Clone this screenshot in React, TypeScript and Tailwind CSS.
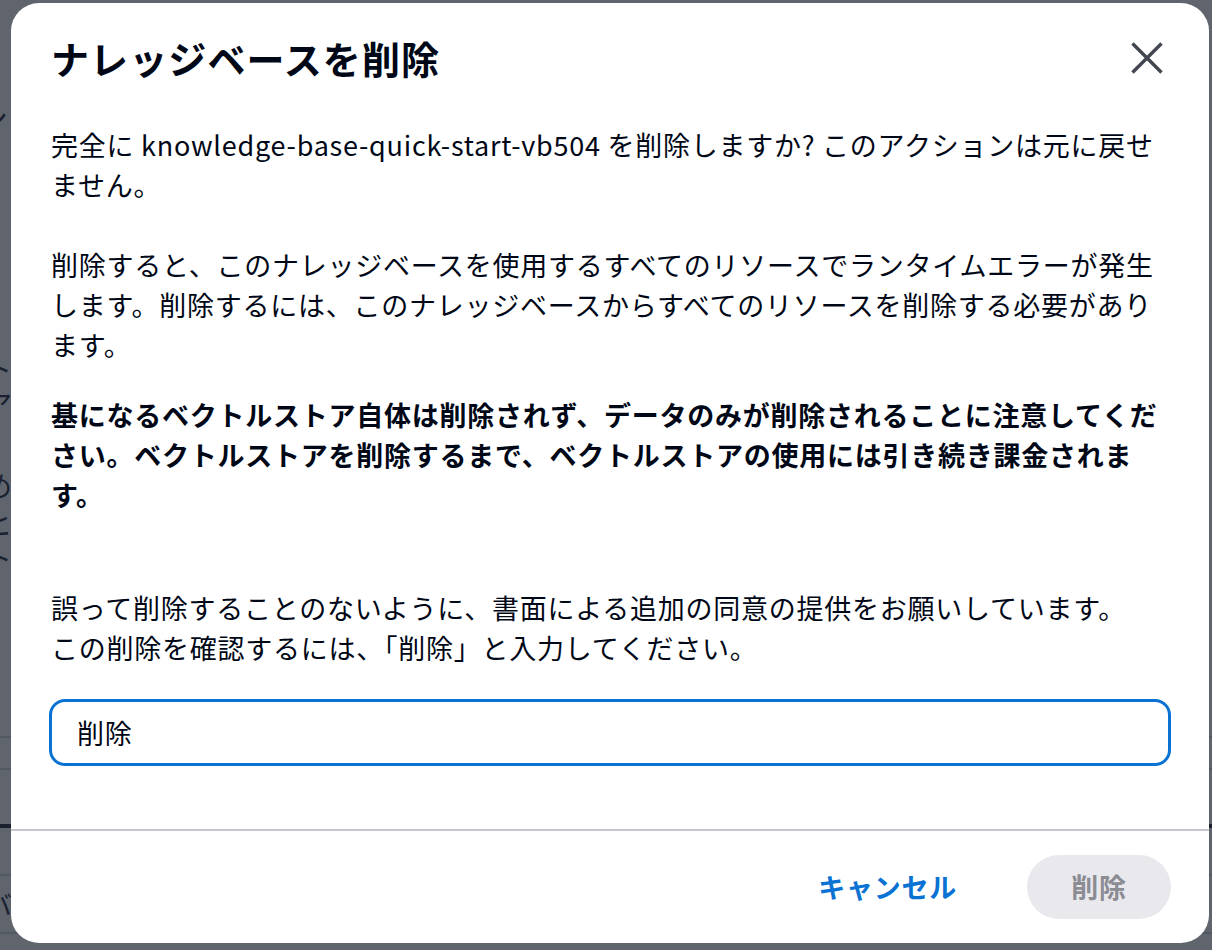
const jp = { fontFamily: '"Noto Sans CJK JP", "Noto Sans", sans-serif' };

// faint page content peeking out at the left edge under the overlay
function BackPage() {
  return (
    <div className="flex h-full w-full flex-col bg-white text-[#000716]" style={jp}>
      <div className="mt-[96px] -ml-[22px] text-[30px] leading-[40px]">シ</div>
      <div className="mt-[214px] -ml-[16px] text-[28px] leading-[36px]">ト</div>
      <div className="-ml-[16px] text-[28px] leading-[36px]">ア</div>
      <div className="mt-[44px] -ml-[16px] text-[28px] leading-[38px]">め</div>
      <div className="-ml-[16px] text-[28px] leading-[38px]">ヒ</div>
      <div className="-ml-[16px] text-[28px] leading-[30px]">ト</div>
      <div className="mt-[164px] h-[2px] w-full bg-[#d1d5db]" />
      <div className="mt-[30px] h-[2px] w-full bg-[#d1d5db]" />
      <div className="mt-[54px] h-[4px] w-full bg-[#000716]" />
      <div className="mt-[46px] h-[2px] w-full bg-[#d1d5db]" />
      <div className="mt-[8px] -ml-[14px] text-[26px] leading-[40px]">バ</div>
      <div className="mt-[8px] h-[2px] w-full bg-[#d1d5db]" />
    </div>
  );
}

function CloseIcon() {
  return (
    <svg width="32" height="32" viewBox="0 0 32 32" fill="none">
      <path d="M1.5 1.5 30.5 30.5M30.5 1.5 1.5 30.5" stroke="currentColor" strokeWidth="3.4" />
    </svg>
  );
}

export default function App() {
  return (
    <div className="relative h-[950px] w-[1212px] overflow-hidden" style={jp}>
      <BackPage />
      <div className="absolute inset-0 bg-[rgba(35,43,55,0.73)]" />

      <div className="absolute left-[11px] top-[3px] flex h-[940px] w-[1198px] flex-col rounded-[28px] bg-white text-[#000716]">
        {/* Header */}
        <div className="flex items-center justify-between px-[38px] pt-[31px]">
          <h1 className="pl-[2px] text-[38px] font-bold leading-[48px] tracking-[1.1px]">ナレッジベースを削除</h1>
          <button className="flex h-[48px] w-[48px] items-center justify-center text-[#424650]">
            <CloseIcon />
          </button>
        </div>

        {/* Body */}
        <div className="flex flex-col px-[38px] text-[27px] leading-[40px] tracking-[0.75px]">
          <div className="w-[1118px] pl-[2px]">
            <p className="mt-[43px]">
              完全に knowledge-base-quick-start-vb504 を削除しますか? このアクションは元に戻せません。
            </p>
            <p className="mt-[40px]">
              削除すると、このナレッジベースを使用するすべてのリソースでランタイムエラーが発生します。削除するには、このナレッジベースからすべてのリソースを削除する必要があります。
            </p>
            <p className="mt-[30px] font-bold">
              基になるベクトルストア自体は削除されず、データのみが削除されることに注意してください。ベクトルストアを削除するまで、ベクトルストアの使用には引き続き課金されます。
            </p>
            <p className="mt-[73px]">
              誤って削除することのないように、書面による追加の同意の提供をお願いしています。
              <br />
              この削除を確認するには、「削除」と入力してください。
            </p>
          </div>
          <input
            readOnly
            value="削除"
            className="mt-[31px] h-[67px] w-full rounded-[16px] border-[3px] border-[#0972d3] pl-[25px] text-[27px] tracking-[0.75px] text-[#000716] outline-none"
            style={jp}
          />
        </div>

        <div className="mt-[63px] h-[2px] w-full bg-[#c6c6cd]" />

        {/* Footer */}
        <div className="flex items-center justify-end px-[38px] pt-[24px]">
          <button className="mr-[70px] text-[27px] font-bold leading-[40px] tracking-[0.75px] text-[#0972d3]">キャンセル</button>
          <button className="flex h-[64px] w-[144px] items-center justify-center rounded-full bg-[#e9e9ed] text-[27px] font-bold tracking-[0.75px] text-[#8c8c94]">
            削除
          </button>
        </div>
      </div>
    </div>
  );
}
